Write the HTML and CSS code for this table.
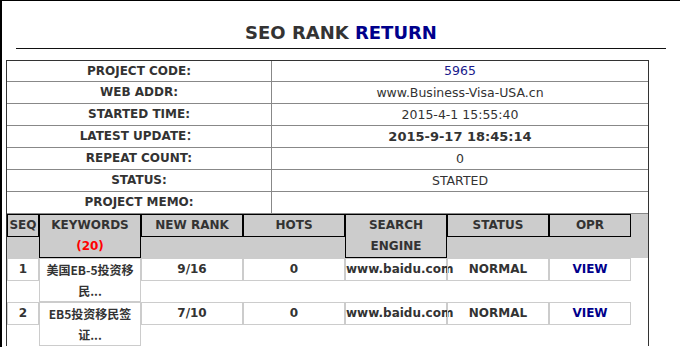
FILE: index.html
```html
<!DOCTYPE html>
<html lang="zh-CN">
<head>
<meta charset="utf-8">
<title>SEO RANK RETURN</title>
<link rel="stylesheet" href="styles.css">
</head>
<body>
<div class="page">
  <h1 class="title">SEO RANK <span class="accent">RETURN</span></h1>
  <hr class="rule">
  <div class="panel">
    <div class="info">
      <div class="info-row first"><div class="label">PROJECT CODE:</div><div class="value code">5965</div></div>
      <div class="info-row"><div class="label">WEB ADDR:</div><div class="value">www.Business-Visa-USA.cn</div></div>
      <div class="info-row"><div class="label">STARTED TIME:</div><div class="value">2015-4-1 15:55:40</div></div>
      <div class="info-row"><div class="label">LATEST UPDATE：</div><div class="value strong">2015-9-17 18:45:14</div></div>
      <div class="info-row"><div class="label">REPEAT COUNT:</div><div class="value">0</div></div>
      <div class="info-row"><div class="label">STATUS:</div><div class="value">STARTED</div></div>
      <div class="info-row"><div class="label">PROJECT MEMO:</div><div class="value"></div></div>
    </div>
    <div class="grid-row head">
      <div class="cell seq">SEQ</div>
      <div class="cell">KEYWORDS<br><span class="count">(20)</span></div>
      <div class="cell">NEW RANK</div>
      <div class="cell">HOTS</div>
      <div class="cell">SEARCH ENGINE</div>
      <div class="cell">STATUS</div>
      <div class="cell opr">OPR</div>
    </div>
    <div class="grid-row data">
      <div class="cell seq">1</div>
      <div class="cell kw">美国EB-5投资移民...</div>
      <div class="cell">9/16</div>
      <div class="cell">0</div>
      <div class="cell engine">www.baidu.com</div>
      <div class="cell">NORMAL</div>
      <div class="cell opr"><span class="link">VIEW</span></div>
    </div>
    <div class="grid-row data">
      <div class="cell seq">2</div>
      <div class="cell kw">EB5投资移民签证...</div>
      <div class="cell">7/10</div>
      <div class="cell">0</div>
      <div class="cell engine">www.baidu.com</div>
      <div class="cell">NORMAL</div>
      <div class="cell opr"><span class="link">VIEW</span></div>
    </div>
  </div>
</div>
</body>
</html>
```

FILE: styles.css
```css
* { box-sizing: border-box; }

html, body {
  margin: 0;
  padding: 0;
  background: #fff;
}

body {
  font-family: "DejaVu Sans", Verdana, sans-serif;
  color: #333;
}

.page {
  border-top: 1px solid #000;
  border-left: 2px solid #000;
  min-height: 100vh;
}

.title {
  margin: 0;
  padding-top: 21px;
  font-size: 18px;
  line-height: 22px;
  font-weight: bold;
  text-align: center;
  color: #333;
}

.accent { color: #00008b; }

.rule {
  margin: 4px 14px 0;
  border: 0;
  height: 1px;
  background: #111;
}

.panel {
  margin: 11px 0 0 4px;
  width: 643px;
  border: 1px solid #333;
  border-bottom: 0;
}

.info-row {
  display: grid;
  grid-template-columns: 265px 1fr;
  height: 22px;
  border-bottom: 1px solid #888;
}

.info-row.first { height: 21px; }

.label, .value {
  text-align: center;
  font-size: 12px;
  line-height: 21px;
  white-space: nowrap;
}

.info-row.first .label, .info-row.first .value { line-height: 20px; }

.label {
  font-weight: bold;
  border-right: 1px solid #888;
}

.value { font-size: 12.5px; }

.value.code { color: #1a1a8c; }

.value.strong {
  font-weight: bold;
  font-size: 13px;
}

.grid-row {
  display: flex;
  align-items: flex-start;
  height: 44px;
}

.grid-row.data { background: #fff; }

.grid-row.head { background: #ccc; }

.cell {
  flex: none;
  width: 102px;
  border: 1px solid #ccc;
  text-align: center;
  font-size: 12px;
  line-height: 21px;
  font-weight: bold;
  color: #333;
}

.head .cell {
  border-color: #000;
}

.cell.seq { width: 32px; }
.cell.opr { width: 82px; }

.cell.kw {
  font-family: "Noto Sans CJK SC", "DejaVu Sans", sans-serif;
  font-size: 12px;
  line-height: 21px;
}

.cell.engine { white-space: nowrap; }

.count { color: #f00; }

.link { color: #00008b; }
```
